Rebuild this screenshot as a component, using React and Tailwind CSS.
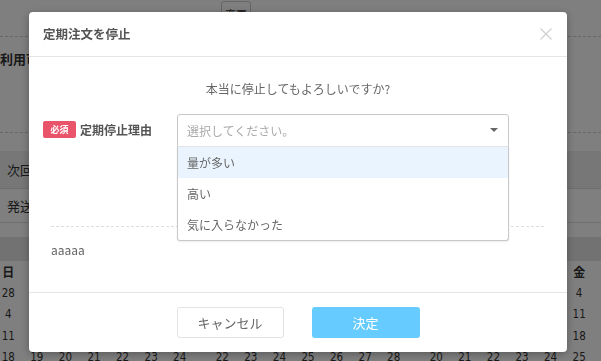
const weekdays = ["日", "月", "火", "水", "木", "金", "土"];

const months = [
  {
    title: "2024年7月",
    rows: [
      [28, 29, 30, 31, 1, 2, 3],
      [4, 5, 6, 7, 8, 9, 10],
      [11, 12, 13, 14, 15, 16, 17],
      [18, 19, 20, 21, 22, 23, 24],
    ],
  },
  {
    title: "2024年9月",
    rows: [
      [1, 2, 3, 4, 5, 6, 7],
      [8, 9, 10, 11, 12, 13, 14],
      [15, 16, 17, 18, 19, 20, 21],
      [22, 23, 24, 25, 26, 27, 28],
    ],
  },
  {
    title: "2024年10月",
    rows: [
      [29, 30, 1, 2, 3, 4, 5],
      [6, 7, 8, 9, 10, 11, 12],
      [13, 14, 15, 16, 17, 18, 19],
      [20, 21, 22, 23, 24, 25, 26],
    ],
  },
];

const options = ["量が多い", "高い", "気に入らなかった"];

const jp = "font-['Noto_Sans_CJK_JP','Liberation_Sans',sans-serif]";

const Background = () => (
  <div className={`w-[601px] h-[361px] overflow-hidden bg-white text-[#333] ${jp}`}>
    {/* top bar, button is mostly scrolled out of view */}
    <div className="h-[36px]">
      <button className="ml-[221px] mt-[-19px] w-[30px] h-[26px] border border-[#ccc] rounded-[3px] bg-white text-[11px] leading-[22px] text-[#333]">
        変更
      </button>
    </div>
    <div className="border-t border-dashed border-[#ccc] h-[96px] flex items-start">
      <p className="mt-[12px] text-[13px] font-bold leading-[20px]">利用可能ポイント</p>
    </div>
    <div className="border-t border-dashed border-[#ccc] h-[19px]" />
    <div className="h-[37px] bg-[#eee] flex items-center pl-[7px] text-[13px]">次回お届け日</div>
    <div className="h-[35px] border-t border-[#ddd] border-b flex items-center pl-[7px] text-[13px]">
      発送予定日
    </div>
    <div className="h-[14px]" />
    <div className="h-[24px] bg-[#e5e5e5] flex ml-[-6px] gap-[14px]">
      {months.map((m) => (
        <div key={m.title} className="w-[200px] text-center text-[12px] leading-[24px] font-bold">
          {m.title}
        </div>
      ))}
    </div>
    <div className="flex ml-[-6px] gap-[14px]">
      {months.map((m) => (
        <div key={m.title} className="w-[200px] shrink-0">
          <div className="grid grid-cols-7 h-[21px] items-center text-center text-[12px] font-bold">
            {weekdays.map((d) => (
              <span key={d}>{d}</span>
            ))}
          </div>
          {m.rows.map((row, i) => (
            <div
              key={i}
              className="grid grid-cols-7 h-[21.5px] items-center text-center text-[11.5px] leading-[14px] font-['DejaVu_Sans_Condensed','DejaVu_Sans',sans-serif]"
            >
              {row.map((n, j) => (
                <span key={j}>{n}</span>
              ))}
            </div>
          ))}
        </div>
      ))}
    </div>
  </div>
);

const Modal = () => (
  <div className={`w-[538px] h-[340px] bg-white rounded-[4px] shadow-[0_2px_8px_rgba(0,0,0,0.3)] ${jp}`}>
    <div className="h-[45px] flex items-center justify-between pl-[14px] pr-[15px] border-b border-[#e5e5e5]">
      <h2 className="text-[12.5px] font-bold text-[#555]">定期注文を停止</h2>
      <svg width="12" height="12" viewBox="0 0 12 12" className="mt-[-1px]">
        <path d="M0.5 0.5L11.5 11.5M11.5 0.5L0.5 11.5" stroke="#cfcfcf" strokeWidth="1.2" />
      </svg>
    </div>

    <div className="h-[235px] pt-[23px]">
      <p className="text-center text-[12px] leading-[18px] text-[#666]">
        本当に停止してもよろしいですか?
      </p>

      <div className="mt-[16px] flex pl-[14px]">
        <div className="w-[134px] flex items-start pt-[7px]">
          <span className="w-[33px] h-[17px] rounded-[2px] bg-[#e9546b] text-white text-[9px] font-bold leading-[17px] text-center">
            必須
          </span>
          <span className="ml-[4px] text-[12px] font-bold leading-[17px] text-[#555]">定期停止理由</span>
        </div>
        <div className="relative w-[332px]">
          <div className="h-[33px] border border-[#c8c8c8] rounded-t-[3px] flex items-center justify-between pl-[9px] pr-[10px]">
            <span className="text-[12px] text-[#aaa]">選択してください。</span>
            <svg width="8" height="4" viewBox="0 0 8 4" className="mt-[-1px]">
              <path d="M0 0H8L4 4Z" fill="#666" />
            </svg>
          </div>
          <ul className="absolute left-0 right-0 top-[32px] z-10 bg-white border border-[#c8c8c8] border-t-[#e3e3e3] rounded-b-[3px] shadow-[0_1px_2px_rgba(0,0,0,0.08)]">
            {options.map((o, i) => (
              <li
                key={o}
                className={`h-[31px] flex items-center pl-[9px] text-[12px] text-[#666] ${i === 0 ? "bg-[#eaf4fe]" : ""}`}
              >
                {o}
              </li>
            ))}
          </ul>
        </div>
      </div>

      <div className="mt-[79px] ml-[22px] mr-[23px] border-t border-dashed border-[#ddd] pt-[14px]">
        <p className="text-[12px] leading-[18px] text-[#666]">aaaaa</p>
      </div>
    </div>

    <div className="border-t border-[#e5e5e5] h-[59px] flex justify-center items-start pt-[14px] gap-[28px]">
      <button className="w-[107px] h-[31px] border border-[#e3e3e3] rounded-[3px] bg-white text-[13px] text-[#666]">
        キャンセル
      </button>
      <button className="w-[108px] h-[31px] rounded-[3px] bg-[#66ccff] text-[13px] text-white">
        決定
      </button>
    </div>
  </div>
);

export default function App() {
  return (
    <div className="relative w-[601px] h-[361px] overflow-hidden">
      <Background />
      <div className="fixed inset-0 bg-black/50 pl-[29px] pt-[12px]">
        <Modal />
      </div>
    </div>
  );
}
